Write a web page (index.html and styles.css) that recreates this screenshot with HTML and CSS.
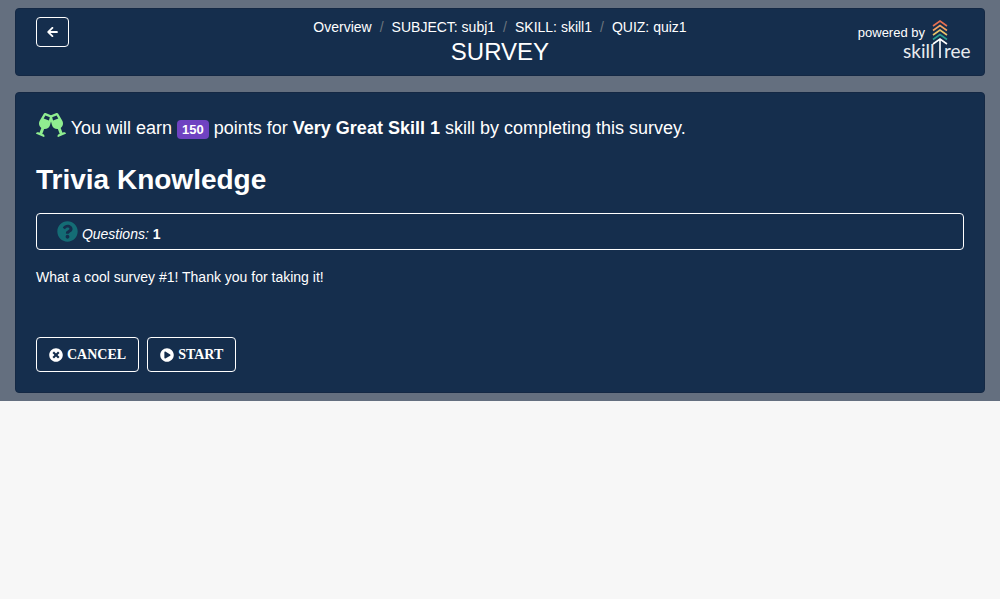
FILE: index.html
```html
<!DOCTYPE html>
<html lang="en">
<head>
<meta charset="utf-8">
<meta name="viewport" content="width=device-width, initial-scale=1">
<title>Survey</title>
<link rel="stylesheet" href="styles.css">
</head>
<body>
<div class="page">
  <header class="panel header">
    <div class="header-side">
      <button class="btn btn-back" type="button" aria-label="Back">
        <svg class="icon-back" viewBox="0 0 448 512" aria-hidden="true"><path d="M257.5 445.1l-22.2 22.2c-9.4 9.4-24.6 9.4-33.9 0L7 273c-9.4-9.4-9.4-24.6 0-33.9L201.4 44.7c9.4-9.4 24.6-9.4 33.9 0l22.2 22.2c9.5 9.5 9.3 25-.4 34.3L136.6 216H424c13.300 0 24 10.700 24 24v32c0 13.300-10.700 24-24 24H136.600l120.500 114.800c9.800 9.300 10 24.800.4 34.300z"/></svg>
      </button>
    </div>
    <div class="header-main">
      <nav aria-label="Breadcrumb">
        <ol class="crumbs">
          <li><a href="#">Overview</a></li>
          <li><a href="#">SUBJECT: subj1</a></li>
          <li><a href="#">SKILL: skill1</a></li>
          <li><a href="#">QUIZ: quiz1</a></li>
        </ol>
      </nav>
      <h1 class="title">SURVEY</h1>
    </div>
    <div class="header-side brand">
      <span class="powered">powered by</span>
      <svg class="logo" viewBox="0 0 72 50" role="img" aria-label="skilltree">
        <g fill="none" stroke-width="1.6">
          <path stroke="#e76f51" d="M31 9l7-5 7 5"/>
          <path stroke="#f4a261" d="M31 13.500l7-5 7 5"/>
          <path stroke="#e9c46a" d="M31 18l7-5 7 5"/>
          <path stroke="#2a9d8f" d="M31 22.500l7-5 7 5"/>
          <path stroke="#fff" d="M31 27l7-5 7 5M38 22v19"/>
        </g>
        <text class="logo-text" x="1" y="41">skill</text>
        <text class="logo-text" x="42" y="41">ree</text>
      </svg>
    </div>
  </header>

  <main class="panel content">
    <p class="earn">
      <svg class="icon-cheers" viewBox="0 0 640 512" aria-hidden="true"><path d="M639.4 433.6c-8.4-20.4-31.8-30.1-52.2-21.6l-22.1 9.2-38.7-101.9c47.9-35 64.8-100.3 34.5-152.8L474.3 16c-8-13.9-25.1-19.7-40-13.6L320 49.8 205.7 2.4c-14.9-6.2-32-.3-40 13.6L79.1 166.5C48.9 219 65.7 284.3 113.6 319.2L74.9 421.1l-22.1-9.2c-20.4-8.5-43.7 1.2-52.2 21.6-1.7 4.1.2 8.8 4.3 10.5l162.3 67.4c4.1 1.7 8.7-.2 10.4-4.3 8.4-20.4-1.2-43.8-21.6-52.3l-22.1-9.2L173.3 342c4.4.5 8.8 1.3 13.1 1.3 51.7 0 99.4-33.1 113.4-85.3l20.2-75.4 20.2 75.4c14 52.2 61.7 85.3 113.4 85.3 4.3 0 8.7-.8 13.1-1.3L506 445.6l-22.1 9.2c-20.4 8.5-30.1 31.9-21.6 52.3 1.7 4.1 6.4 6 10.4 4.3L635.1 444c4-1.7 6-6.3 4.3-10.4zM275.9 162.1l-112.1-46.5 36.500-63.400 94.500 39.200-18.900 70.700zm88.200 0l-18.900-70.700 94.500-39.200 36.500 63.400-112.100 46.500z"/></svg>
      You will earn <span class="badge">150</span> points for <strong>Very Great Skill 1</strong> skill by completing this survey.
    </p>
    <h2 class="quiz-name">Trivia Knowledge</h2>
    <div class="info">
      <svg class="icon-question" viewBox="0 0 512 512" aria-hidden="true"><path d="M504 256c0 136.997-111.043 248-248 248S8 392.997 8 256C8 119.083 119.043 8 256 8s248 111.083 248 248zM262.655 90c-54.497 0-89.255 22.957-116.549 63.758-3.536 5.286-2.353 12.415 2.715 16.258l34.699 26.31c5.205 3.947 12.621 3.008 16.665-2.122 17.864-22.658 30.113-35.797 57.303-35.797 20.429 0 45.698 13.148 45.698 32.958 0 14.976-12.363 22.667-32.534 33.976C247.128 238.528 216 254.941 216 296v4c0 6.627 5.373 12 12 12h56c6.627 0 12-5.373 12-12v-1.333c0-28.462 83.186-29.647 83.186-106.667 0-58.002-60.165-102-116.531-102zM256 338c-25.365 0-46 20.635-46 46 0 25.364 20.635 46 46 46s46-20.636 46-46c0-25.365-20.635-46-46-46z"/></svg>
      <em>Questions:</em> <strong>1</strong>
    </div>
    <p class="description">What a cool survey #1! Thank you for taking it!</p>
    <div class="actions">
      <button class="btn btn-action" type="button">
        <svg class="icon-btn" viewBox="0 0 512 512" aria-hidden="true"><path d="M256 8C119 8 8 119 8 256s111 248 248 248 248-111 248-248S393 8 256 8zm121.600 313.100c4.700 4.700 4.700 12.300 0 17L338 377.600c-4.700 4.700-12.300 4.700-17 0L256 312l-65.100 65.600c-4.700 4.700-12.300 4.700-17 0L134.400 338c-4.700-4.700-4.700-12.300 0-17l65.600-65-65.600-65.100c-4.700-4.700-4.700-12.300 0-17l39.600-39.600c4.700-4.700 12.300-4.700 17 0l65 65.700 65.100-65.600c4.700-4.700 12.300-4.700 17 0l39.600 39.600c4.700 4.700 4.700 12.300 0 17L312 256l65.600 65.100z"/></svg>
        CANCEL
      </button>
      <button class="btn btn-action" type="button">
        <svg class="icon-btn" viewBox="0 0 512 512" aria-hidden="true"><path d="M256 8C119 8 8 119 8 256s111 248 248 248 248-111 248-248S393 8 256 8zm115.700 272l-176 101c-15.800 8.800-35.700-2.500-35.700-21V152c0-18.400 19.800-29.800 35.700-21l176 107c16.400 9.200 16.400 32.900 0 42z"/></svg>
        START
      </button>
    </div>
  </main>
</div>
</body>
</html>
```

FILE: styles.css
```css
* { box-sizing: border-box; }

body {
  margin: 0;
  background: #f7f7f7;
  color: #fff;
  font: 14px/21px "Liberation Sans", Arial, sans-serif;
}

h1, h2, p, ol { margin: 0; padding: 0; }

svg { fill: currentColor; }

.page {
  display: flex;
  flex-direction: column;
  gap: 16px;
  padding: 8px 15px;
  background: #646f7f;
}

.panel {
  background: #152e4d;
  border: 1px solid #142844;
  border-radius: 4px;
}

.header {
  display: grid;
  grid-template-columns: 1fr auto 1fr;
  padding: 8px 10px 8px 20px;
}

.header-main {
  text-align: center;
  margin-left: -10px;
}

.crumbs {
  display: flex;
  justify-content: center;
  list-style: none;
}

.crumbs li + li::before {
  content: "/";
  padding: 0 8px;
  color: #6c757d;
}

.crumbs a { color: inherit; text-decoration: none; }

.title {
  font-size: 24px;
  font-weight: 400;
  line-height: 27px;
}

.brand {
  display: flex;
  justify-content: flex-end;
  align-items: flex-start;
}

.powered {
  font-size: 13px;
  line-height: 31px;
  margin-right: -23px;
}

.logo { width: 72px; height: 50px; }

.logo-text { font: 19px Lato, sans-serif; fill: #e8ebef; }

.btn {
  display: inline-flex;
  align-items: center;
  justify-content: center;
  border: 1px solid #fff;
  border-radius: 4px;
  background: transparent;
  color: #fff;
  cursor: pointer;
}

.btn-back { width: 33px; height: 30px; padding: 0; }

.icon-back { width: 11px; height: 12px; }

.content { padding: 20px; }

.earn { font-size: 18px; line-height: 30px; }

.icon-cheers {
  width: 30px;
  height: 24px;
  color: #90ee90;
  vertical-align: -3px;
}

.badge {
  display: inline-block;
  padding: 3px 5px;
  border-radius: 4px;
  background: #6f42c1;
  font-size: 13px;
  font-weight: 700;
  line-height: 13px;
}

.quiz-name {
  margin-top: 20px;
  font-size: 28px;
  line-height: 34px;
}

.info {
  margin-top: 16px;
  padding: 7px 20px 4px;
  border: 1px solid #fff;
  border-radius: 4px;
}

.icon-question {
  width: 21px;
  height: 21px;
  color: #146c75;
  vertical-align: -3px;
}

.description { margin-top: 16px; line-height: 22px; }

.actions {
  display: flex;
  gap: 8px;
  margin-top: 49px;
}

.btn-action {
  gap: 4px;
  padding: 6px 12px;
  font: 700 14px/21px "Liberation Serif", "Times New Roman", serif;
}

.icon-btn { width: 14px; height: 14px; }
```
